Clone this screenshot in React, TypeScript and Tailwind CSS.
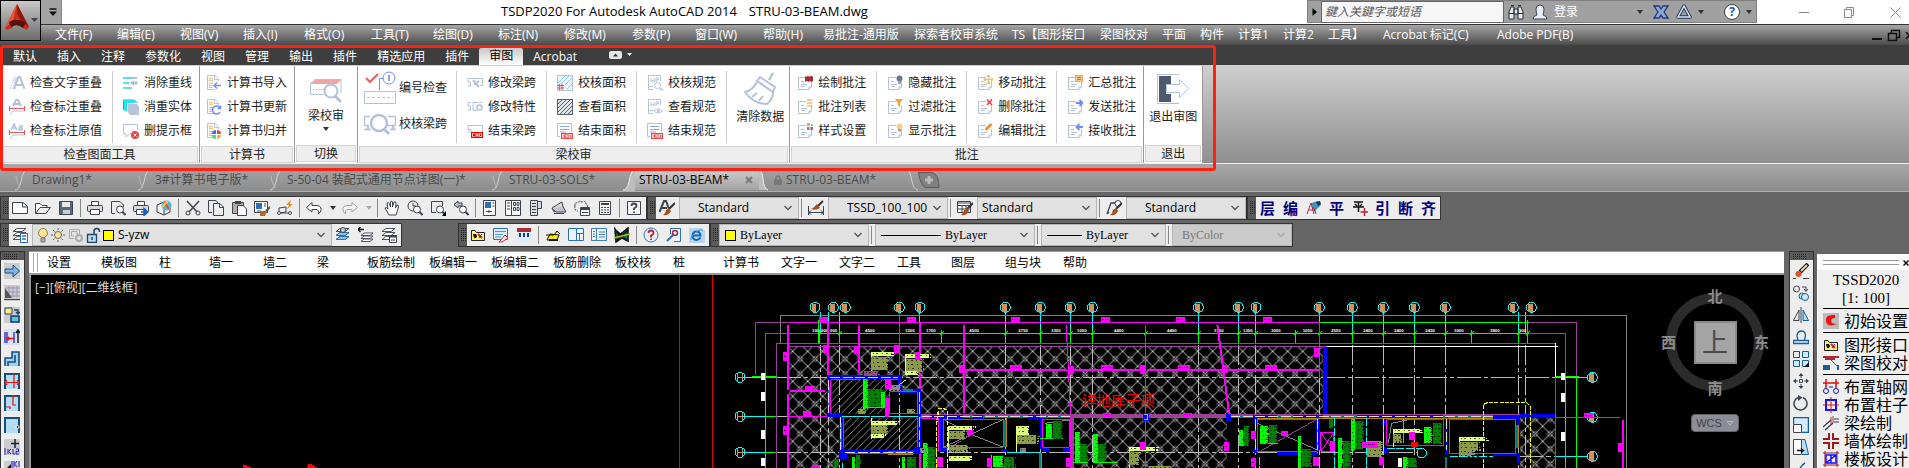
import React from 'react';

type Kids = { children?: React.ReactNode };

/* ---------- shared pieces ---------- */

function Svg({ w = 16, h = 16, children }: Kids & { w?: number; h?: number }) {
  return (
    <svg width={w} height={h} viewBox={`0 0 ${w} ${h}`} fill="none" aria-hidden="true" className="shrink-0">
      {children}
    </svg>
  );
}

function Chevron({ color = '#555' }: { color?: string }) {
  return (
    <Svg w={8} h={6}>
      <path d="M0.5 1L4 4.5L7.5 1" stroke={color} strokeWidth="1.3" />
    </Svg>
  );
}

function Down({ color = '#333' }: { color?: string }) {
  return (
    <Svg w={6} h={4}>
      <path d="M0 0H6L3 4Z" fill={color} />
    </Svg>
  );
}

const L = '#b4c1da';
const K = '#3c4450';
const B = '#2f6fb5';

/* ---------- ribbon icons ---------- */

const note = (
  <>
    <path d="M9 2.500H1.500V14.500H12L14.500 12V6" stroke={L} />
    <path d="M12 14.500V12H14.500" stroke={L} />
    <path d="M4 6.500H7M4 9.500H10M4 11.500H8" stroke={L} />
  </>
);
const sheet = (
  <>
    <path d="M9 14.500H1.500V0.500H9L12.500 4V6M8.500 0.500V4.500H12" stroke={L} />
    <path d="M3 3.500H7M3 5.500H7" stroke="#f3c98a" strokeWidth="1.500" />
    <path d="M3 8.500H7M3 10.500H6M3 12.500H6" stroke={L} />
  </>
);
const book = (
  <>
    <path d="M6 14.500H1.500V0.500H13.500V6" stroke={L} />
    <path d="M4 3V7L5.500 5L7 7V3M9 7V3H11.500V5H9M1.500 11.500H6" stroke={L} />
  </>
);
const endTag = (
  <>
    <rect x="4" y="10" width="12" height="6" fill="#f04545" />
    <path d="M7.500 11.500H5.500V14.500H7.500M5.500 13H7M9 15V11.500L11 14.500V11M12.500 11.500V14.500H14.500V11.500H12.500" stroke="#fff" strokeWidth="0.8" />
  </>
);

const ribbonIcons: Record<string, React.ReactNode> = {
  textOverlap: (
    <>
      <path d="M1 14L6 2V14M4 14L8 2" stroke={L} strokeDasharray="2 1" />
      <path d="M5 14L9.500 2H11L15.500 14M7.500 10H13" stroke={L} strokeWidth="2" />
    </>
  ),
  dimOverlap: (
    <>
      <path d="M4 7L7 1H9L12 7M6 5H11" stroke={L} strokeWidth="2" />
      <path d="M0 9.500H16M0.500 7V12M15.500 7V12" stroke="#ee5757" />
      <path d="M1 16L4 12H15" stroke={L} />
    </>
  ),
  dimValue: (
    <>
      <path d="M2 7L5 1L8 7M3.500 5H7M10 3H13V7H10V5H13" stroke={L} strokeWidth="1.500" />
      <path d="M0 9.500H16M0.500 7V12M15.500 7V12" stroke="#ee5757" />
      <path d="M1 16L4 12H15" stroke={L} />
    </>
  ),
  dedupLine: (
    <>
      <path d="M0 3H9M0 8H6M0 13H9" stroke="#27d6e0" strokeWidth="1.500" />
      <path d="M8 3H14" stroke="#a3a9b3" strokeWidth="1.500" />
      <path d="M8 8H15M10.500 6V10L8 8ZM13 6V10" stroke="#8db4c8" />
    </>
  ),
  dedupSolid: (
    <>
      <path d="M0.500 11V1H11.500L14 4" stroke="#4f9dad" />
      <path d="M1 1H11L13 4H4V13L1 11Z" fill="#20e4ee" />
      <path d="M5 5H14L16 8V16H7L5 13Z" fill="#b9c4da" />
    </>
  ),
  delBox: (
    <>
      <path d="M14.500 7V1.500H0.500V10.500H3V14L7 10.500H8" stroke={L} />
      <circle cx="12" cy="12" r="4" fill="#e5484d" />
      <path d="M10.500 10.500L13.500 13.500M13.500 10.500L10.500 13.500" stroke="#fff" />
    </>
  ),
  calcImport: (
    <>
      {sheet}
      <path d="M15 10.500H8M11 7.500L8 10.500L11 13.500" stroke="#6f8df0" strokeWidth="1.300" />
    </>
  ),
  calcUpdate: (
    <>
      {sheet}
      <path d="M14 9A4 4 0 1 0 14 13M14.500 6.500V9.500H11.500" stroke="#6f8df0" strokeWidth="1.500" />
    </>
  ),
  calcMerge: (
    <>
      {sheet}
      <path d="M10 7V11H6A4 4 0 0 1 10 7Z" fill="#4f6fd0" />
      <path d="M11 7V11H15A4 4 0 0 0 11 7Z" fill="#e5484d" />
      <path d="M10 16V12H6A4 4 0 0 0 10 16Z" fill="#5fd08a" />
      <path d="M11 16V12H15A4 4 0 0 1 11 16Z" fill="#f3b35a" />
    </>
  ),
  beamEdit: (
    <>
      <path d="M4 3.500H1V7H3.500V11H0.500M3.500 3.500H15.500V10.500H13" stroke={L} />
      <path d="M6 5L12 12M12 6L7 10" stroke={L} strokeWidth="2" />
    </>
  ),
  beamProp: (
    <>
      <path d="M4 3.500H1V7H3.500V11H0.500M11 3.500H6V11.500H10M12 3.500H15.500" stroke={L} />
      <circle cx="12.500" cy="8.500" r="2.500" stroke={L} strokeWidth="1.500" />
    </>
  ),
  beamEnd: (
    <>
      <path d="M1 2.500H15.500V9M1 2.500V6.500H4V9H0.500" stroke={L} />
      <rect x="4" y="9" width="12" height="6" fill="#e00" />
      <path d="M7.500 10.500H5.500V13.500H7.500M9 14V10.500L11 13.500V10M12.500 10.500V13.500H14.500V10.500H12.500" stroke="#fff" strokeWidth="0.8" />
    </>
  ),
  areaCheck: (
    <>
      <rect x="0.500" y="0.500" width="15" height="15" fill="#e8f5fb" stroke={L} />
      <path d="M1 8L8 1M4 9L12 1M8 10L15 3M10 14L15 9" stroke="#7cc4df" strokeWidth="0.9" />
      <path d="M2.500 9V15M5 9V15M0.500 10.500H7M0.500 13H7" stroke="#ee5757" strokeWidth="1.100" />
    </>
  ),
  areaView: (
    <>
      <rect x="0.500" y="0.500" width="15" height="15" fill="#dfe3ea" stroke="#566074" />
      <path d="M1 5L5 1M1 9L9 1M1 13L13 1M3 15L15 3M7 15L15 7M11 15L15 11" stroke="#566074" />
    </>
  ),
  areaEnd: (
    <>
      <path d="M3 13.500H0.500V0.500H14.500V9" stroke={L} />
      <path d="M3 3.500H12M3 6.500H12M3 9H9" stroke="#8fa2e6" />
      {endTag}
    </>
  ),
  codeCheck: (
    <>
      {book}
      <circle cx="10.500" cy="10.500" r="3" stroke={L} fill="#fff" />
      <path d="M13 13L15.500 15.500" stroke={L} strokeWidth="1.500" />
    </>
  ),
  codeView: (
    <>
      {book}
      <path d="M7 12Q11 7.500 15.500 12Q11 16 7 12Z" stroke={L} fill="#fff" />
      <circle cx="11.500" cy="12" r="1.500" fill={L} />
    </>
  ),
  noteDraw: (
    <>
      {note}
      <path d="M8 1L9.500 2L11 0.500L12.500 2L14 0.500L16 2V6L14.500 7L13 6L11.500 7L10 6L8 7Z" fill="#a82b36" />
    </>
  ),
  noteList: (
    <>
      {note}
      <path d="M10 1H15.500M10 4H15.500M10 7H15.500" stroke="#f3b96a" strokeWidth="1.500" />
    </>
  ),
  noteStyle: (
    <>
      {note}
      <path d="M10 0H13V3H10Z" fill="#f3a35a" />
      <path d="M14 1H16V3H14Z" fill="#6fd08a" />
      <path d="M10 4H12.500V7H10Z" fill="#5f7ff0" />
      <path d="M13.500 4H16V7H13.500Z" fill="#e5484d" />
    </>
  ),
  noteHide: (
    <>
      {note}
      <circle cx="12.500" cy="3.500" r="3" fill="#6b7688" />
      <path d="M11 6H14V9H11Z" fill="#9aa3b2" />
    </>
  ),
  noteFilter: (
    <>
      {note}
      <path d="M8 0H16L13 4V8L11 6.500V4Z" fill="#f0a236" />
    </>
  ),
  noteShow: (
    <>
      {note}
      <circle cx="12.500" cy="3.500" r="3" fill="#f7cf8c" />
      <path d="M11 6H14V8.500H11Z" fill="#9aa3b2" />
    </>
  ),
  noteMove: (
    <>
      {note}
      <path d="M11.500 0V9M7 4.500H16M10 1.500L11.500 0L13 1.500M10 7.500L11.500 9L13 7.500M8.500 3L7 4.500L8.500 6M14.500 3L16 4.500L14.500 6" stroke="#f3b96a" strokeWidth="1.200" />
    </>
  ),
  noteDelete: (
    <>
      {note}
      <path d="M10 0.500L15 6M15 0.500L10 6" stroke="#e5484d" strokeWidth="1.700" />
    </>
  ),
  noteEdit: (
    <>
      {note}
      <path d="M8.500 7L14.500 1" stroke="#e8973a" strokeWidth="3" />
    </>
  ),
  noteSum: (
    <>
      {note}
      <rect x="8.500" y="0.500" width="7" height="6" fill="#f7cf8c" stroke="#e8a850" />
      <path d="M10 2.500H14M10 4.500H14" stroke="#b27a2c" />
    </>
  ),
  noteSend: (
    <>
      {note}
      <path d="M9 4H15M12.500 1L15.500 4L12.500 7" stroke="#6f8df0" strokeWidth="2" />
    </>
  ),
  noteReceive: (
    <>
      {note}
      <path d="M16 4H10M12.500 1L9.500 4L12.500 7" stroke="#6f8df0" strokeWidth="2" />
    </>
  ),
};

/* ---------- ribbon ---------- */

function Column({ items, className = 'px-[10px]', last = false }: { items: [string, string][]; className?: string; last?: boolean }) {
  return (
    <div className={`mb-[3px] mt-[5px] flex flex-col ${className} ${last ? '' : 'border-r border-[#ccc]'}`}>
      {items.map(([icon, label]) => (
        <button key={label} type="button" className="flex h-6 items-center gap-[5px] whitespace-nowrap">
          <Svg>{ribbonIcons[icon]}</Svg>
          <span>{label}</span>
        </button>
      ))}
    </div>
  );
}

function Panel({ title, children }: Kids & { title: string }) {
  return (
    <section className="flex flex-col border-r border-[#999] bg-white">
      <div className="flex flex-1">{children}</div>
      <h2 className="mx-px mb-px flex h-[17px] items-center justify-center border border-[#d4d4d4] bg-[#eee] pt-px">{title}</h2>
    </section>
  );
}

function Ribbon() {
  return (
    <div className="flex h-[98px] bg-gradient-to-b from-[#d0d0d0] to-[#8f8f8f] pt-px text-xs text-[#222]">
      <Panel title="检查图面工具">
        <Column className="pl-[9px] pr-[10px]" items={[['textOverlap', '检查文字重叠'], ['dimOverlap', '检查标注重叠'], ['dimValue', '检查标注原值']]} />
        <Column last className="pl-[10px] pr-[7px]" items={[['dedupLine', '消除重线'], ['dedupSolid', '消重实体'], ['delBox', '删提示框']]} />
      </Panel>
      <Panel title="计算书">
        <Column last className="pl-[6px] pr-[7px]" items={[['calcImport', '计算书导入'], ['calcUpdate', '计算书更新'], ['calcMerge', '计算书归并']]} />
      </Panel>
      <Panel title="切换">
        <button type="button" className="flex flex-col items-center px-[13px] pt-[10px]">
          <Svg w={32} h={30}>
            <path d="M0.500 18V7.500L5 3.500H31V17M0.500 18.500H14M0.500 7.500H27" stroke={L} />
            <path d="M5 4H31L27 8H1Z" fill="#f0a3a3" />
            <path d="M3 13.500H14" stroke={L} strokeDasharray="2 1" />
            <circle cx="21" cy="15" r="6.500" stroke={L} strokeWidth="2" fill="#fff" />
            <path d="M25 20L31 26" stroke={L} strokeWidth="3" />
          </Svg>
          <span className="leading-5">梁校审</span>
          <span className="mt-px">
            <Down />
          </span>
        </button>
      </Panel>
      <Panel title="梁校审">
        <div className="mb-[3px] mt-[5px] flex flex-col justify-between border-r border-[#ccc] pl-[6px] pr-[9px]">
          <button type="button" className="flex h-[34px] items-center gap-[3px]">
            <Svg w={32} h={34}>
              <path d="M2 7L6 11L14 3" stroke="#e06060" strokeWidth="2" />
              <circle cx="25" cy="7" r="6" stroke="#6f8df0" />
              <path d="M25 4V10" stroke="#8fa2e6" strokeWidth="2" />
              <path d="M19 7.500H15.500V19" stroke="#6f8df0" />
              <path d="M0.500 20.500H31.500V32.500H0.500Z" stroke={L} />
              <path d="M3 26.500H29" stroke={L} strokeDasharray="3 2" />
            </Svg>
            <span>编号检查</span>
          </button>
          <button type="button" className="mb-1 flex h-[30px] items-center gap-[3px]">
            <Svg w={32} h={22}>
              <path d="M6 3.500H0.500V12.500H5M24 3.500H31.500V12.500H24M0 16.500H7M26 16.500H32M3 16L4 13L5 16M28 16L29 13L30 16" stroke={L} strokeWidth="1.300" />
              <circle cx="15" cy="10" r="8" stroke={L} strokeWidth="2.500" />
              <path d="M20 16L25 21" stroke={L} strokeWidth="3" />
            </Svg>
            <span>校核梁跨</span>
          </button>
        </div>
        <Column items={[['beamEdit', '修改梁跨'], ['beamProp', '修改特性'], ['beamEnd', '结束梁跨']]} />
        <Column items={[['areaCheck', '校核面积'], ['areaView', '查看面积'], ['areaEnd', '结束面积']]} />
        <Column items={[['codeCheck', '校核规范'], ['codeView', '查看规范'], ['areaEnd', '结束规范']]} />
        <button type="button" className="flex flex-col items-center pl-[9px] pr-[5px] pt-[6px]">
          <Svg w={32} h={34}>
            <path d="M29 1L25 8" stroke={L} strokeWidth="2.500" />
            <path d="M16 5L31 15L29 20L13 9Z" stroke={L} strokeWidth="2" />
            <path d="M13 10Q9 18 1 20Q9 32 23 32Q29 27 29 20M8 25L13 21M15 29L19 24" stroke={L} strokeWidth="2" />
          </Svg>
          <span className="mt-px leading-5">清除数据</span>
        </button>
      </Panel>
      <Panel title="批注">
        <Column className="pl-[7px] pr-[10px]" items={[['noteDraw', '绘制批注'], ['noteList', '批注列表'], ['noteStyle', '样式设置']]} />
        <Column items={[['noteHide', '隐藏批注'], ['noteFilter', '过滤批注'], ['noteShow', '显示批注']]} />
        <Column items={[['noteMove', '移动批注'], ['noteDelete', '删除批注'], ['noteEdit', '编辑批注']]} />
        <Column last className="pl-[10px] pr-[7px]" items={[['noteSum', '汇总批注'], ['noteSend', '发送批注'], ['noteReceive', '接收批注']]} />
      </Panel>
      <Panel title="退出">
        <button type="button" className="flex flex-col items-center px-[5px] pt-[6px]">
          <Svg w={32} h={34}>
            <path d="M22 2.500H0.500V31.500H22" stroke={L} />
            <path d="M2 4H14V12H9V22H14V30H2Z" fill="#4e596e" />
            <path d="M9.500 12.500H22.500V7.500L31.500 16.500L22.500 25.500V20.500H9.500Z" stroke={L} fill="#fff" />
          </Svg>
          <span className="mt-px leading-5">退出审图</span>
        </button>
      </Panel>
    </div>
  );
}

/* ---------- header ---------- */

function TitleBar() {
  return (
    <header className="relative flex h-[25px] border-b border-[#333] bg-white">
      <button type="button" aria-label="应用程序菜单" className="absolute left-0 top-0 z-10 flex h-[41px] w-[41px] items-center border border-black bg-gradient-to-b from-[#c9c9c9] to-[#6d6d6d]">
        <Svg w={39} h={39}>
          <path d="M16 3L4 27L6 29L11 27L16 18L22 27L26 29L28 26Z" fill="#c3301c" />
          <path d="M16 3L28 26L20 20L16 12Z" fill="#8c1a10" />
          <path d="M16 3L12 20L4 27Z" fill="#e4553a" />
          <path d="M8 21Q16 16 25 22L22 27Q16 22 10 26Z" fill="#5d0f0a" />
          <path d="M30 17H37L33.500 21Z" fill="#39424e" />
        </Svg>
      </button>
      <div className="flex w-[62px] justify-end border-r border-[#888] bg-[#a3a3a3] pr-1">
        <button type="button" aria-label="自定义快速访问工具栏">
          <Svg w={8} h={8}>
            <path d="M0.500 1H7.500" stroke="#111" strokeWidth="1.500" />
            <path d="M0 3.500H8L4 8Z" fill="#111" />
          </Svg>
        </button>
      </div>
      <h1 className="flex flex-1 items-center justify-center gap-3 text-[13px] text-black">
        <span>TSDP2020 For Autodesk AutoCAD 2014</span>
        <span>STRU-03-BEAM.dwg</span>
      </h1>
      <div className="flex h-[23px] items-center border border-[#808080] bg-[#a0a0a0] text-xs text-white">
        <button type="button" aria-label="展开搜索" className="flex w-[13px] justify-center">
          <Svg w={5} h={8}>
            <path d="M0.500 0V8L5 4Z" fill="#000" />
          </Svg>
        </button>
        <input aria-label="搜索" placeholder="鍵入关鍵字或短语" className="mr-1 h-[22px] w-[183px] border border-[#666] bg-[#f6f6f6] px-[3px] italic placeholder:text-[#555]" />
        <button type="button" aria-label="查找" className="w-6">
          <Svg>
            <path d="M1 15V8L3 3H6V15ZM10 15V3H13L15 8V15ZM6 5H10V10H6Z" fill="#e8e8e8" stroke="#26303c" />
            <path d="M3 1.500H6M10 1.500H13M1 9.500H6M10 9.500H15" stroke="#26303c" />
          </Svg>
        </button>
        <button type="button" className="flex items-center gap-[6px]">
          <Svg>
            <path d="M1 15Q1 12 5 11Q4 8 4 5Q4 1 8 1Q12 1 12 5Q12 8 11 11Q15 12 15 15Z" fill="#e9eef5" stroke="#3a4656" />
          </Svg>
          <span>登录</span>
        </button>
        <button type="button" aria-label="登录选项" className="ml-[59px]">
          <Down />
        </button>
        <button type="button" aria-label="Exchange" className="ml-[10px]">
          <Svg>
            <path d="M1 2H6L8 5L10 2H15L11 8L15 14H10L8 11L6 14H1L5 8Z" fill="#8fa9d8" stroke="#1f3a7a" strokeWidth="1.300" />
          </Svg>
        </button>
        <button type="button" aria-label="A360" className="ml-[7px]">
          <Svg>
            <path d="M8 2L14 13H2Z" stroke="#24375f" strokeWidth="3.500" strokeLinejoin="round" />
            <path d="M8 2L14 13H2Z" stroke="#dbe4f5" strokeWidth="1.500" />
          </Svg>
        </button>
        <button type="button" aria-label="A360 选项" className="ml-[6px]">
          <Down />
        </button>
        <button type="button" aria-label="帮助" className="ml-[20px] flex size-4 items-center justify-center rounded-full border border-[#345] bg-white text-xs font-bold text-[#1f4fae]">
          ?
        </button>
        <button type="button" aria-label="帮助选项" className="ml-[6px] mr-1">
          <Down />
        </button>
      </div>
      <div className="flex w-[152px] items-center justify-end gap-[35px] pr-2">
        <button type="button" aria-label="最小化">
          <Svg w={10} h={10}>
            <path d="M0 5.500H10" stroke="#888" />
          </Svg>
        </button>
        <button type="button" aria-label="还原">
          <Svg w={11} h={11}>
            <path d="M0.500 2.500H7.500V10.500H0.500ZM2.500 2V0.500H9.500V8.500H8" stroke="#888" />
          </Svg>
        </button>
        <button type="button" aria-label="关闭">
          <Svg w={11} h={11}>
            <path d="M0.500 0.500L10.500 10.500M10.500 0.500L0.500 10.500" stroke="#888" />
          </Svg>
        </button>
      </div>
    </header>
  );
}

const menus: [string, string][] = [
  ['文件(F)', 'w-[62px]'], ['编辑(E)', 'w-[63px]'], ['视图(V)', 'w-[63px]'], ['插入(I)', 'w-[61px]'],
  ['格式(O)', 'w-[67px]'], ['工具(T)', 'w-[62px]'], ['绘图(D)', 'w-[65px]'], ['标注(N)', 'w-[66px]'],
  ['修改(M)', 'w-[68px]'], ['参数(P)', 'w-[63px]'], ['窗口(W)', 'w-[68px]'], ['帮助(H)', 'w-[60px]'],
  ['易批注-通用版', 'w-[91px]'], ['探索者校审系统', 'w-[98px]'], ['TS【图形接口', 'w-[88px]'],
  ['梁图校对', 'w-[62px]'], ['平面', 'w-[38px]'], ['构件', 'w-[38px]'], ['计算1', 'w-[45px]'],
  ['计算2', 'w-[45px]'], ['工具】', 'w-[55px]'], ['Acrobat 标记(C)', 'w-[114px]'], ['Adobe PDF(B)', 'w-[100px]'],
];

function MenuBar() {
  return (
    <nav className="flex h-5 items-center justify-between bg-gradient-to-b from-[#a6a6a6] to-[#4b4b4b] pl-[55px] text-xs text-white">
      <div className="flex">
        {menus.map(([t, w]) => (
          <button key={t} type="button" className={`text-left whitespace-nowrap ${w}`}>
            {t}
          </button>
        ))}
      </div>
      <Svg w={38} h={14}>
        <path d="M1 11H11" stroke="#111" strokeWidth="2" />
        <path d="M17.500 5.500H25.500V12.500H17.500ZM20.500 5V2.500H28.500V9.500H26M35 4L41 11M41 4L35 11" stroke="#111" strokeWidth="1.500" />
      </Svg>
    </nav>
  );
}

const ribbonTabs = ['默认', '插入', '注释', '参数化', '视图', '管理', '输出', '插件', '精选应用', '插件', '审图', 'Acrobat'];

function RibbonTabs() {
  return (
    <div className="flex h-5 bg-[#3e3e3e] pl-[3px] text-xs text-white">
      {ribbonTabs.map((t, i) => (
        <button
          key={i}
          type="button"
          className={t === '审图' ? 'mt-[3px] rounded-t-xs bg-gradient-to-b from-[#c8c8c8] to-white px-[10px] pb-px leading-4 text-black' : 'px-[10px] pt-[3px]'}
        >
          {t}
        </button>
      ))}
      <button type="button" aria-label="最小化功能区" className="ml-[22px] flex items-center gap-[5px]">
        <Svg w={13} h={8}>
          <rect width="13" height="8" rx="2" fill="#e6e6e6" />
          <path d="M4 5.500H9L6.500 2.500Z" fill="#333" />
        </Svg>
        <Svg w={6} h={4}>
          <path d="M0 0H5L2.500 3Z" fill="#fff" />
        </Svg>
      </button>
    </div>
  );
}

/* ---------- drawing tabs ---------- */

function Slope() {
  return (
    <Svg w={12} h={22}>
      <path d="M0 21Q4 21 6 13Q8 1 12 1" stroke="#d2d2d2" />
      <path d="M1 7Q2 15 5 19" stroke="#bbb" />
    </Svg>
  );
}

const fileTabs: [string, string][] = [
  ['Drawing1*', 'w-[123px]'], ['3#计算书电子版*', 'w-[132px]'], ['S-50-04 装配式通用节点详图(一)*', 'w-[222px]'], ['STRU-03-SOLS*', 'w-[131px]'],
];

function FileTabs() {
  return (
    <div className="flex h-[28px] items-center border-b border-[#b0b0b0] bg-gradient-to-b from-[#a8a8a8] to-[#8c8c8c] pl-[15px] pt-1 text-xs text-[#4a4a4a]">
      {fileTabs.map(([t, w]) => (
        <button key={t} type="button" className={`flex items-center gap-[5px] whitespace-nowrap ${w}`}>
          <Slope />
          {t}
        </button>
      ))}
      <div className="flex w-[145px] items-center text-black">
        <Svg w={12} h={22}>
          <path d="M0 21Q4 21 6 13Q8 1 12 1V22H0Z" fill="#bdbdbd" />
          <path d="M0 21Q4 21 6 13Q8 1 12 1" stroke="#eee" />
        </Svg>
        <div className="flex h-5 flex-1 items-center justify-between border-t border-[#e0e0e0] bg-gradient-to-b from-[#cacaca] to-[#a4a4a4] pl-1 pr-[6px]">
          <button type="button">STRU-03-BEAM*</button>
          <button type="button" aria-label="关闭选项卡">
            <Svg w={8} h={8}>
              <path d="M1 1L7 7M7 1L1 7" stroke="#777" strokeWidth="2" />
            </Svg>
          </button>
        </div>
        <Svg w={9} h={22}>
          <path d="M0 1Q3 1 4 10Q5 20 9 21H0Z" fill="#bdbdbd" />
          <path d="M0 1Q3 1 4 10Q5 20 9 21" stroke="#eee" />
        </Svg>
      </div>
      <button type="button" className="ml-[6px] flex w-[133px] items-center gap-1">
        <Svg w={8} h={10}>
          <path d="M2 5V3Q2 1 4 1Q6 1 6 3V5" stroke="#777" strokeWidth="1.500" />
          <rect y="4.500" width="8" height="5.500" rx="1" fill="#777" />
        </Svg>
        STRU-03-BEAM*
      </button>
      <Svg w={11} h={22}>
        <path d="M0 1Q3 1 5 12Q6 20 11 21" stroke="#d2d2d2" />
      </Svg>
      <button type="button" aria-label="新建图形">
        <Svg w={22} h={16}>
          <path d="M0.500 0.500H14Q21 2 21 15.500H7Q2 12 0.500 0.500Z" fill="#808080" stroke="#5c5c5c" />
          <path d="M11 4V12M7 8H15" stroke="#bbb" strokeWidth="3" />
        </Svg>
      </button>
    </div>
  );
}

/* ---------- toolbars ---------- */

const printer = (
  <>
    <path d="M4.500 6V1.500H11.500V6" stroke={K} fill="#fff" />
    <rect x="0.500" y="5.500" width="15" height="6" rx="1" stroke={K} fill="#d9dde2" />
    <path d="M3.500 9.500H12.500V14.500H3.500Z" stroke={K} fill="#fff" />
  </>
);
const lens = (
  <>
    <circle cx="10" cy="9.500" r="3.500" fill="#fff" stroke={K} />
    <path d="M12.500 12L15.500 15" stroke={K} strokeWidth="2" />
  </>
);
const stack = <path d="M1 12.500L5 9.500H14L10 12.500ZM1 8.500L5 5.500H14L10 8.500ZM1 4.500L5 1.500H14L10 4.500Z" stroke={K} strokeWidth="0.9" fill="#fff" />;
const brush = (
  <>
    <path d="M16 3L10 9" stroke="#333" strokeWidth="2" />
    <path d="M10 8L12 11Q10 16 4 15Q7 13 7 10Z" fill="#a4521c" />
  </>
);
const folderY = (
  <>
    <path d="M1.500 13.500V3.500H5L6.500 5.500H14.500V13.500Z" fill="#fff27a" stroke="#222" />
    <path d="M3 7H6L7 9L6 11H4Z" fill="#111" />
    <path d="M8 7L12 11" stroke="#d22" strokeWidth="2" />
    <path d="M9 11L12 7" stroke="#22c" />
  </>
);

const toolIcons: Record<string, React.ReactNode> = {
  新建: <path d="M0.500 13.500V2.500H11L15.500 6.500V13.500ZM10.500 3V7H15" stroke={K} fill="#fff" />,
  打开: (
    <>
      <path d="M0.500 13V3.500H5L7 5.500H12V8" stroke={K} fill="#fff" />
      <path d="M0.500 13.500L5 7.500H15.500L11 13.500Z" stroke={K} fill="#eee" />
    </>
  ),
  保存: (
    <>
      <path d="M1.500 1.500H14.500V14.500H1.500Z" fill="#59697c" stroke={K} />
      <path d="M4 2H12V7H4Z" fill="#e6ebf0" />
      <path d="M5 10H12V14H5Z" fill="#c5ccd4" />
    </>
  ),
  打印: printer,
  打印预览: (
    <>
      <path d="M1.500 13V1.500H10L13.500 5V7M5 13.500H1.500" stroke={K} />
      {lens}
    </>
  ),
  发布: (
    <>
      {printer}
      <path d="M8 12H13M11 8.500L15 12L11 15.500Z" stroke="#1b5fc0" fill="#1b5fc0" strokeWidth="1.500" />
    </>
  ),
  三维打印: (
    <>
      <path d="M1 5L8 2V15L1 12ZM8 15L14 12V7" stroke={K} fill="#eef2f6" />
      <circle cx="10.500" cy="5.500" r="5" fill="#58b7d8" />
      <path d="M8 2L13 9" stroke="#e24a3a" strokeWidth="2" />
      <path d="M6 7L12 1" stroke="#f1cf3c" strokeWidth="2" />
    </>
  ),
  剪切: (
    <>
      <path d="M2 1L12 12M14 1L4 12" stroke={K} strokeWidth="1.500" />
      <circle cx="3" cy="13" r="2" stroke={K} />
      <circle cx="13" cy="13" r="2" stroke={K} />
    </>
  ),
  复制: <path d="M4 12.500H0.500V0.500H8L10 3M5.500 3.500H12L15.500 7V15.500H5.500ZM11.500 4V7.500H15" stroke={K} />,
  粘贴: (
    <>
      <path d="M1.500 2.500H12.500V13.500H1.500Z" fill="#b6aaa0" stroke={K} />
      <path d="M4 1H10V4H4Z" fill={K} />
      <path d="M6.500 5.500H12L15.500 9V15.500H6.500Z" fill="#fff" stroke={K} />
    </>
  ),
  特性匹配: (
    <>
      <path d="M0.500 1.500H13.500V12.500H0.500Z" fill="#fff" stroke={K} />
      <path d="M2 3H8V9H2Z" fill={B} />
      <path d="M10 4H12M10 6H12M3 11H7" stroke={K} />
      <path d="M16 7L12 11" stroke="#555" strokeWidth="2" />
      <path d="M6 11H13L11 16H6Z" fill="#b5662a" />
    </>
  ),
  块编辑器: (
    <>
      <path d="M2 13L2 8L9 7V12ZM2 13H14" stroke={K} />
      <circle cx="2" cy="13" r="1.500" fill="#fff" stroke={K} />
      <circle cx="13" cy="13" r="1.500" fill="#fff" stroke={K} />
      <path d="M14 0L9 5H12L10 9L16 4H13Z" fill="#f08a24" />
    </>
  ),
  放弃: <path d="M6 2.500L0.500 7.500L6 12V9.500H11Q13 10 12.500 14Q16 11 15 8Q14 5.500 11 5.500H6Z" stroke={K} fill="#fff" />,
  重做: <path d="M10 2.500L15.500 7.500L10 12V9.500H5Q3 10 3.500 14Q0 11 1 8Q2 5.500 5 5.500H10Z" stroke="#a5a5a5" fill="#f5f5f5" />,
  平移: <path d="M5 15L1 8Q2 6.500 4 9L3 3Q4.500 1.500 5.500 4L6.500 7L6.500 1.500Q8 0.500 8.500 2V7L10 2Q11.500 1 12 3L11.500 8L13 5Q15 5 14.500 7L12 15Z" stroke={K} fill="#fff" />,
  实时缩放: (
    <>
      <circle cx="6" cy="6" r="5" stroke={K} />
      <path d="M6 3V6H9" stroke={K} />
      {lens}
    </>
  ),
  窗口缩放: (
    <>
      <path d="M12.500 6V1.500H1.500V12.500H6" stroke={K} />
      {lens}
      <path d="M16 11V16H12Z" fill="#000" />
    </>
  ),
  缩放上一个: (
    <>
      <path d="M5 1L1 4.500L5 8V6H9V3H5Z" stroke={K} fill="#b8c0c8" />
      {lens}
    </>
  ),
  特性: (
    <>
      <path d="M1.500 0.500H13.500V15.500H1.500Z" stroke={K} fill="#fff" />
      <path d="M3 2H9V8H3Z" fill={B} />
      <path d="M10.500 3H12.500M10.500 6H12.500M4 11.500H10M7 10V13" stroke={K} />
    </>
  ),
  设计中心: (
    <>
      <path d="M0.500 0.500H15.500V15.500H0.500ZM6.500 1V15" stroke={K} fill="#fff" />
      <path d="M2 3H5M2 6H5M2 9H5" stroke={K} />
      <path d="M8.500 2.500H10.500V5.500H8.500ZM12 2.500H14V5.500H12ZM8.500 7.500H10.500V10.500H8.500ZM12 7.500H14V10.500H12Z" stroke={K} />
    </>
  ),
  工具选项板: (
    <>
      <path d="M2.500 0.500H9.500V15.500H2.500ZM9.500 1.500H13.500V8.500H9.500" stroke={K} fill="#d9dde2" />
      <path d="M4 3.500H8M4 6.500H8M4 9.500H8M4 12.500H8" stroke={K} />
    </>
  ),
  图纸集: (
    <>
      <path d="M1 8L11 2L12 7L3 12Z" stroke={K} fill="#ddd" />
      <path d="M1 8.500L5 12H15L12 6.500M3 13.500H13" stroke={K} fill="#bfc4ca" />
    </>
  ),
  标记集: (
    <>
      <path d="M1 6Q0 2 4 3Q5 0 8 2Q12 0 12 4Q15 5 13 7M1 6Q0 11 4 11" stroke={K} strokeDasharray="2 1" />
      <path d="M6.500 7.500H15.500V15.500H6.500Z" fill="#fff" stroke={K} />
      <path d="M7 9H15" stroke={K} strokeWidth="2" />
      <path d="M8 12.500H14" stroke={K} />
    </>
  ),
  计算器: (
    <>
      <path d="M2.500 1.500H13.500V14.500H2.500Z" fill="#f4f4f4" stroke={K} />
      <path d="M4 4H12" stroke={K} strokeWidth="2" />
      <path d="M4 7.500H12M4 10H12M4 12.500H12" stroke={K} strokeDasharray="2 1" />
    </>
  ),
  帮助: (
    <>
      <path d="M1.500 1.500H14.500V14.500H1.500Z" fill="#f4f4f4" stroke={K} />
      <path d="M5.500 6Q5.500 3.500 8 3.500Q10.500 3.500 10.500 6Q10.500 7 8 8.500V10M8 11.500V13" stroke={K} strokeWidth="1.800" />
    </>
  ),
  文字样式: (
    <>
      <path d="M0.500 12L5 1H7L10 9M3 8H8" stroke={K} strokeWidth="2" />
      {brush}
    </>
  ),
  标注样式: (
    <>
      <path d="M0.500 6V15M15.500 6V15M1 12.500H15M3 10.500L1 12.500L3 14.500M13 10.500L15 12.500L13 14.500" stroke={K} />
      <path d="M15 1L10 6" stroke="#333" strokeWidth="2" />
      <path d="M9 4L12 8Q8 11 3 9Q6 8 7 6Z" fill="#a4521c" />
    </>
  ),
  表格样式: (
    <>
      <path d="M0.500 1.500H13.500V12.500H0.500ZM1 5.500H13M1 9H13M5 5V12M9 5V12" stroke={K} fill="#fff" />
      <path d="M1 3H13" stroke="#9aa3ad" strokeWidth="2" />
      {brush}
    </>
  ),
  多重引线样式: (
    <>
      <path d="M1 14L5 3H9M1 14L3 12" stroke={K} strokeWidth="1.300" />
      <circle cx="12" cy="3.500" r="3" fill="#fff" stroke={K} />
      {brush}
    </>
  ),
  图层特性: (
    <>
      {stack}
      <path d="M8.500 6.500H15.500V15.500H8.500Z" fill="#fff" stroke={B} />
      <path d="M10 9H14M10 12H14" stroke={B} strokeWidth="1.500" />
    </>
  ),
  图层置为当前: (
    <>
      {stack}
      <path d="M1 12.500L5 9.500H14L10 12.500Z" fill="#8fc4ea" stroke={B} />
      <path d="M1 8.500L5 5.500H14L10 8.500Z" fill="#8fc4ea" stroke={B} />
      <circle cx="8" cy="3" r="2.500" fill="#ccc" stroke={K} />
    </>
  ),
  上一个图层: (
    <>
      <path d="M3 14.500L6 12H15L12 14.500ZM3 11.500L6 9H15L12 11.500ZM3 8.500L6 6H15L12 8.500Z" stroke={K} strokeWidth="0.9" fill="#fff" />
      <path d="M0 2.500H6M2.500 0L0 2.500L2.500 5" stroke="#111" strokeWidth="1.300" />
    </>
  ),
  图层状态: (
    <>
      {stack}
      <path d="M8.500 8.500H15.500V15.500H8.500Z" fill="#fff" stroke={K} />
      <path d="M8 9.500H16" stroke={K} strokeWidth="2" />
      <path d="M10 13H14" stroke={K} />
    </>
  ),
  图形接口: folderY,
  表格编辑: (
    <>
      <path d="M0.500 1.500H14.500V12.500H0.500Z" fill="#d8ecfa" stroke={B} />
      <path d="M2 4.500H13M2 7.500H10M2 10H8" stroke={B} strokeWidth="0.7" />
      <path d="M6 15L12 8L15 11L9 15Z" stroke="#b13a4a" fill="#f6e6e8" />
    </>
  ),
  图层表: (
    <>
      <path d="M1 1H15V5H1Z" fill="#a82b36" />
      <path d="M1 5H15V14H1Z" fill="#d8ecfa" />
      <path d="M4 6V10M8 6V10M12 6V10" stroke="#1c3b66" strokeWidth="2" />
    </>
  ),
  打开图纸: (
    <>
      <path d="M2 13L5 7L14 8L12 13ZM1 8H9L12 4L15 7" fill="#ffee00" stroke="#111" />
      <path d="M4 13H13" stroke="#111" strokeWidth="2" />
    </>
  ),
  右侧面板: <path d="M0.500 1.500H15.500V13.500H0.500ZM8.500 2V13M8.500 6.500H15M11.500 7V13" stroke={B} fill="#e8f3fc" />,
  左侧面板: <path d="M0.500 1.500H15.500V13.500H0.500ZM5.500 2V13M2 4.500H4M2 7H4M2 9.500H4M8 5H14M8 7.500H14M8 10H14" stroke={B} strokeWidth="0.9" fill="#e8f3fc" />,
  网架: (
    <>
      <path d="M1 2L5 8L9 5L14 1V14L8 11L2 15Z" fill="#0a6f5a" stroke="#111" strokeWidth="1.500" />
      <path d="M3 4L13 14M14 3L3 13" stroke="#111" strokeWidth="1.500" />
      <path d="M0 11L16 7" stroke="#c8b800" strokeWidth="1.500" />
    </>
  ),
  在线帮助: (
    <>
      <circle cx="8" cy="8" r="7" stroke="#3a78b8" />
      <path d="M5.500 6Q5.500 3.500 8 3.500Q10.500 3.500 10.500 6Q10.500 7.500 8 8.500V10.500M8 11.500V13" stroke="#a82b46" strokeWidth="1.800" />
    </>
  ),
  报告: (
    <>
      <path d="M4.500 7V1.500H14.500V14.500H8" stroke={B} fill="#e8f3fc" />
      <path d="M1 14L8 7" stroke={B} strokeWidth="2" />
      <circle cx="9" cy="6" r="2.500" stroke="#a82b46" strokeWidth="1.500" />
    </>
  ),
  网站: (
    <>
      <path d="M0 1H13L16 4V16H0Z" fill="#b9d6ee" />
      <path d="M11.500 10.500Q10 13 7.500 13Q3.500 12.500 3.500 8.500Q4 4.500 7.500 4.500Q11 4.500 11.500 8.500H4" stroke="#1566b5" strokeWidth="2" />
      <path d="M2 13Q1 10 7 5Q13 1 13.500 4" stroke="#3f9be0" />
    </>
  ),
};

function Tool({ name }: { name: string }) {
  return (
    <button type="button" aria-label={name} className="flex h-full w-[23px] shrink-0 items-center pl-[3px]">
      <Svg>{toolIcons[name]}</Svg>
    </button>
  );
}

const Sep = () => <div className="ml-[2px] mr-[3px] h-[18px] w-px shrink-0 bg-[#888]" />;

function Grip() {
  return (
    <svg width="8" height="22" viewBox="0 0 8 22" aria-hidden="true" className="shrink-0 bg-[#5a5a5a]">
      <path d="M2.500 4V18M4.500 4V18M6.500 4V18" stroke="#222" strokeDasharray="1 1" />
    </svg>
  );
}

const Bar = ({ children, className = '' }: Kids & { className?: string }) => (
  <div className={`flex h-6 items-center border border-[#333] bg-[#ededed] ${className}`}>{children}</div>
);

function Combo({ label, value, className, children, disabled = false }: Kids & { label: string; value: string; className: string; disabled?: boolean }) {
  return (
    <div className={`relative flex h-[22px] shrink-0 items-center border border-[#b5b5b5] ${disabled ? 'bg-[#cbcbcb] text-[#777]' : 'bg-[#e1e1e1] text-black'} ${className}`}>
      {children}
      <select aria-label={label} disabled={disabled} className="h-full min-w-0 flex-1 appearance-none bg-transparent text-inherit">
        <option>{value}</option>
      </select>
      <span className="pointer-events-none absolute inset-y-0 right-[6px] flex items-center">
        <Chevron color={disabled ? '#aaa' : '#555'} />
      </span>
    </div>
  );
}

const Swatch = () => <span className="mr-1 size-[11px] shrink-0 border border-black bg-[#ffff00]" />;

function Toolbars() {
  return (
    <div className="flex flex-col gap-[3px] bg-[#666] pb-1 pt-1 text-xs">
      <div className="flex">
        <Bar>
          <Grip />
          <Tool name="新建" /><Tool name="打开" /><Tool name="保存" /><Sep />
          <Tool name="打印" /><Tool name="打印预览" /><Tool name="发布" /><Tool name="三维打印" /><Sep />
          <Tool name="剪切" /><Tool name="复制" /><Tool name="粘贴" /><Tool name="特性匹配" /><Tool name="块编辑器" /><Sep />
          <Tool name="放弃" />
          <button type="button" aria-label="放弃列表" className="flex w-[13px] justify-center"><Down /></button>
          <Tool name="重做" />
          <button type="button" aria-label="重做列表" className="flex w-[13px] justify-center"><Down color="#aaa" /></button>
          <Sep />
          <Tool name="平移" /><Tool name="实时缩放" /><Tool name="窗口缩放" /><Tool name="缩放上一个" /><Sep />
          <Tool name="特性" /><Tool name="设计中心" /><Tool name="工具选项板" /><Tool name="图纸集" /><Tool name="标记集" /><Tool name="计算器" /><Sep />
          <Tool name="帮助" />
        </Bar>
        <Bar>
          <Grip />
          <Tool name="文字样式" />
          <Combo label="文字样式" value="Standard" className="w-[120px] pl-[18px]" />
          <Sep />
          <Tool name="标注样式" />
          <Combo label="标注样式" value="TSSD_100_100" className="w-[120px] pl-[18px]" />
          <Sep />
          <Tool name="表格样式" />
          <Combo label="表格样式" value="Standard" className="w-[120px] pl-[4px]" />
          <Sep />
          <Tool name="多重引线样式" />
          <Combo label="多重引线样式" value="Standard" className="w-[120px] pl-[18px]" />
        </Bar>
        <Bar>
          <Grip />
          {['层', '编', '', '平', '¶', '引', '断', '齐'].map((t, i) =>
            t === '' || t === '¶' ? (
              <button key={i} type="button" aria-label={t === '' ? '文字查找' : '对齐移动'} className="flex w-[23px] justify-center">
                <Svg>
                  {t === '' ? (
                    <>
                      <path d="M5 3L12 1L15 5L8 12Z" fill="#3f96b8" />
                      <path d="M10 2L14 1L15 4L12 6Z" fill="#123a5c" />
                      <path d="M1 14L5 3L8 14M3 10H7M7 7Q9 9 10 14" stroke="#b02a3a" />
                    </>
                  ) : (
                    <>
                      <path d="M2 2H11M6.500 2V12M1 7H12M3 4L5 6M10 4L8 6" stroke="#111" strokeWidth="1.500" />
                      <path d="M12.500 8V16M8.500 12H16" stroke="#b02a3a" strokeWidth="1.500" />
                    </>
                  )}
                </Svg>
              </button>
            ) : (
              <button key={i} type="button" className="w-[23px] text-center text-[15px] font-bold leading-5 text-[#00007c]">
                {t}
              </button>
            ),
          )}
        </Bar>
      </div>
      <div className="flex">
        <Bar className="mr-[56px]">
          <Grip />
          <Tool name="图层特性" />
          <Combo label="图层" value="S-yzw" className="w-[300px] pl-1">
            <Svg w={66} h={16}>
              <circle cx="6" cy="6" r="4.500" fill="#ffe69a" stroke="#8d7a3c" />
              <path d="M4 11H8V15H4Z" fill="#aaa" stroke="#777" />
              <circle cx="21" cy="8" r="3.500" fill="#ffe69a" stroke="#666" />
              <path d="M21 1V3M21 13V15M14 8H16M26 8H28M16 3L17.500 4.500M26 3L24.500 4.500M16 13L17.500 11.500M26 13L24.500 11.500" stroke="#666" />
              <path d="M32.500 2.500H42.500V7M32.500 2.500V11.500H37M34.500 4.500H40V7M34.500 4.500V9H37" stroke="#aaa" />
              <circle cx="42" cy="11" r="3" stroke="#aaa" strokeWidth="2" />
              <path d="M50.500 7.500H59.500V15.500H50.500Z" fill="#b5dcf5" stroke="#246" strokeWidth="1.300" />
              <path d="M55 10V13M57 7V4Q57 1.500 60 1.500Q62.500 1.500 62.500 5" stroke="#246" strokeWidth="1.500" />
            </Svg>
            <Swatch />
          </Combo>
          <Tool name="图层置为当前" /><Tool name="上一个图层" /><Tool name="图层状态" />
        </Bar>
        <Bar>
          <Grip />
          <Tool name="图形接口" /><Tool name="表格编辑" /><Tool name="图层表" /><Sep />
          <Tool name="打开图纸" /><Tool name="右侧面板" /><Tool name="左侧面板" /><Tool name="网架" /><Sep />
          <Tool name="在线帮助" /><Tool name="报告" /><Tool name="网站" />
        </Bar>
        <Bar className="font-['Liberation_Serif','Noto_Sans_CJK_SC',serif]">
          <Grip />
          <Combo label="颜色" value="ByLayer" className="w-[150px] pl-[5px]"><Swatch /></Combo>
          <Sep />
          <Combo label="线型" value="ByLayer" className="w-[160px] pl-[5px]"><span className="mr-1 h-px w-[60px] bg-black" /></Combo>
          <Sep />
          <Combo label="线宽" value="ByLayer" className="w-[125px] pl-[5px]"><span className="mr-1 h-px w-[35px] bg-black" /></Combo>
          <Sep />
          <Combo label="打印样式" value="ByColor" disabled className="w-[120px] pl-[9px]" />
        </Bar>
      </div>
    </div>
  );
}

/* ---------- side toolbars ---------- */

const glass = <path d="M1 16V1H15V16" stroke="#14507c" strokeWidth="2" fill="#b4dcf4" />;

const leftTools: [string, React.ReactNode][] = [
  ['下一步', <><rect width="16" height="16" fill="#ccc" /><path d="M1 6H9V2L15.500 8L9 14V10H1Z" fill="#7fb2e0" stroke="#1e4f86" /></>],
  ['网格', <><rect width="16" height="16" fill="#ccc" /><path d="M5 1V12M9 1V12M13 1V12M2 3H16M2 7H16M2 11H16" stroke="#99b" /><path d="M1 3L8 13H1Z" fill="#555" /><path d="M0 14.500H16" stroke="#444" /></>],
  ['块替换', <><rect width="16" height="16" fill="#ccc" /><path d="M1 1H8V7H1Z" fill="#ffe98a" stroke="#246" /><path d="M10 3H14V6M12 5L14 7L16 5" stroke="#246" strokeWidth="1.500" /><path d="M7 9H15V15H7Z" fill="#5fc3d8" stroke="#123a7c" strokeWidth="1.500" /></>],
  ['间距', <><rect width="16" height="16" fill="#dde" /><path d="M1 3V14M3 3V14M10 3V14" stroke="#11c" strokeWidth="1.200" /><path d="M3 9.500H10M5 8L3 9.500L5 11" stroke="#d11" strokeWidth="1.500" /><path d="M14 14V2M12 4L14 1L16 4" stroke="#123" strokeWidth="1.500" /></>],
  ['轮廓', <><path d="M1 15V7H8V1H15V15Z" fill="#9fd0ee" /><path d="M1 15V7H8V1H15V15M4 15V11H11V4" stroke="#14507c" strokeWidth="1.600" /></>],
  ['拉伸', <>{glass}<path d="M10 1V15M1 9.500H15M3 7L1 9.500L3 12M13 7L15 9.500L13 12" stroke="#d11" strokeWidth="1.200" /></>],
  ['折线', <>{glass}<path d="M1 12H6V14M9 8V1H12M9 8V10H12" stroke="#d11" strokeWidth="1.200" /></>],
  ['矩形', <>{glass}<circle cx="13.500" cy="10" r="1.500" stroke="#fff" fill="#246" /></>],
  ['梁编号', <><rect width="16" height="16" fill="#ccc" /><path d="M11 0V9M7 4.500H15" stroke="#123" strokeWidth="1.500" /><path d="M1 9V16M4 10V15M7 10L4.500 12.500L7 15M9 10V15H11M12 10H14.500V12.500H12V15H15" stroke="#22c" /></>],
  ['梁标注', <><rect width="16" height="16" fill="#ccc" /><path d="M8 0V8M10 0V6M13 0L10.500 3L13 6M15 0V6" stroke="#22c" /><path d="M2 8L7 3V10Z" fill="#111" /></>],
];

const modTools: [string, React.ReactNode][] = [
  ['删除', <><path d="M15 1L7 9" stroke="#111" strokeWidth="4" /><path d="M14 2L8 8" stroke="#f1dca0" strokeWidth="2" /><circle cx="5.500" cy="11" r="3" fill="#e0532a" /><path d="M0 15.500H3M10 15.500H16" stroke={K} /></>],
  ['复制', <><circle cx="3.500" cy="4" r="3" stroke={K} /><path d="M9 2H13V6M11 4L13 6.500L15 4" stroke={K} /><circle cx="9" cy="11" r="3" fill="#b5dcf5" stroke="#14609c" /><circle cx="12" cy="12" r="3.500" fill="#d3ebfa" stroke="#14609c" /></>],
  ['镜像', <><path d="M6 3V13.500H0.500Z" stroke={K} /><path d="M8 0V16" stroke={K} /><path d="M10 3V13.500H15.500Z" stroke="#14609c" fill="#b5dcf5" /></>],
  ['偏移', <path key="a" d="M0.500 14.500V11.500H5Q4 8 4 6Q5 2 8.500 2Q12 2 12.500 6Q12 9 11.500 11.500H15.500V14.500ZM5 11.500H11.500" stroke="#14609c" strokeWidth="1.300" />],
  ['阵列', <><path d="M0.500 0.500H6.500V6.500H0.500Z" stroke={K} /><path d="M9.500 0.500H15.500V6.500H9.500ZM0.500 9.500H6.500V15.500H0.500ZM9.500 9.500H15.500V15.500H9.500Z" stroke="#14609c" fill="#d3ebfa" /><path d="M16 11V16H11Z" fill="#111" /></>],
  ['移动', <><path d="M8 1V5M8 11V15M1 8H5M11 8H15M6.500 6.500H9.500V9.500H6.500Z" stroke={K} /><path d="M8 0L10.500 3H5.500ZM8 16L10.500 13H5.500ZM0 8L3 5.500V10.500ZM16 8L13 5.500V10.500Z" fill={K} /></>],
  ['旋转', <><path d="M10 2.500A6.500 6.500 0 1 1 5 2.500" stroke={K} strokeWidth="1.500" /><path d="M5 0L9.500 2.500L5 6Z" fill={K} /></>],
  ['缩放', <><path d="M0.500 7V0.500H15.500V15.500H9" stroke="#14609c" fill="#d3ebfa" strokeWidth="1.500" /><path d="M0.500 7.500H8.500V15.500H0.500Z" stroke={K} fill="#fff" /></>],
  ['拉伸', <><path d="M8.500 0.500H0.500V15.500H8.500Z" stroke={K} fill="#fff" /><path d="M9 0.500H12L15.500 15.500H9" stroke="#14609c" fill="#b5dcf5" /><path d="M4 11.500H10M8 9.500L10.500 11.500L8 13.500" stroke="#111" strokeWidth="1.500" /></>],
  ['修剪', <path key="a" d="M12 2Q8 4 6 10" stroke="#14609c" strokeWidth="1.500" />],
];

function SideBar({ tools }: { tools: [string, React.ReactNode][] }) {
  return (
    <aside className="w-[25px] shrink-0 overflow-hidden border-x border-t border-[#333] bg-[#ededed]">
      <svg width="23" height="8" viewBox="0 0 23 8" aria-hidden="true" className="block bg-[#5a5a5a]">
        <path d="M3 2.500H17M3 4.500H17M3 6.500H17" stroke="#222" strokeDasharray="1 1" />
      </svg>
      {tools.map(([name, icon]) => (
        <button key={name} type="button" aria-label={name} className="flex h-[22px] w-full items-center justify-start pl-[3px]">
          <Svg>{icon}</Svg>
        </button>
      ))}
    </aside>
  );
}

/* ---------- structural menu ---------- */

const tssdMenus: [string, string][] = [
  ['设置', 'w-[54px]'], ['模板图', 'w-[58px]'], ['柱', 'w-[50px]'], ['墙一', 'w-[54px]'], ['墙二', 'w-[54px]'], ['梁', 'w-[50px]'],
  ['板筋绘制', 'w-[62px]'], ['板编辑一', 'w-[62px]'], ['板编辑二', 'w-[62px]'], ['板筋删除', 'w-[62px]'], ['板校核', 'w-[58px]'],
  ['桩', 'w-[50px]'], ['计算书', 'w-[58px]'], ['文字一', 'w-[58px]'], ['文字二', 'w-[58px]'], ['工具', 'w-[54px]'],
  ['图层', 'w-[54px]'], ['组与块', 'w-[58px]'], ['帮助', 'w-[40px]'],
];

function StructMenu() {
  return (
    <nav className="flex h-[22px] items-center border-t border-[#999] bg-white text-xs text-black">
      <span className="ml-1 mr-[9px] h-[19px] w-[5px] border-x border-[#aaa]" />
      {tssdMenus.map(([t, w]) => (
        <button key={t} type="button" className={`text-left whitespace-nowrap ${w}`}>
          {t}
        </button>
      ))}
    </nav>
  );
}

/* ---------- model space ---------- */

const M = '#ff00ff';
const P = '#9c4098';

/* Axis positions; drawing units are one third of a pixel. */
const axes = [271, 295, 328, 508, 568, 826, 931, 1021, 1087, 1405, 1525, 1576, 1768, 1867, 1960, 2053, 2146, 2365, 2386];
const bubbles = [255, 310, 346, 508, 570, 826, 931, 1021, 1087, 1405, 1525, 1578, 1768, 1867, 1960, 2053, 2146, 2350, 2404];
const ticks = [268, 328, 634, 826, 931, 1021, 1087, 1247, 1405, 1525, 1576, 1696, 1768, 1867, 1960, 2053, 2146, 2224, 2365, 2392];
const dims: [number, string][] = [
  [246, '100'], [273, '900'], [300, '900'], [405, '4500'], [525, '1500'], [588, '1700'], [718, '4500'], [865, '2750'], [963, '3300'], [1041, '1050'],
  [1152, '4400'], [1311, '4400'], [1452, '3700'], [1539, '1350'], [1623, '3050'], [1718, '1050'], [1803, '2550'], [1899, '2400'], [1992, '2400'],
  [2086, '2450'], [2172, '3000'], [2280, '3800'], [2367, '900'],
];
const tags: [number, number, number, number][] = [
  [268, 82, 26, 16], [530, 82, 28, 16], [843, 82, 28, 16], [1113, 82, 28, 16], [1338, 82, 28, 16], [1599, 82, 26, 14],
  [159, 185, 16, 28], [280, 165, 14, 24], [372, 168, 14, 24], [493, 165, 16, 24], [555, 185, 16, 24], [688, 225, 16, 24],
  [226, 288, 24, 14], [220, 363, 24, 16], [159, 408, 16, 26], [246, 526, 24, 12], [840, 226, 36, 12], [1113, 226, 36, 12], [1344, 226, 36, 12],
  [1604, 226, 36, 12], [1015, 228, 16, 24], [1230, 225, 18, 26], [1475, 225, 18, 24], [1752, 175, 16, 26], [1120, 368, 24, 14], [1360, 368, 26, 14],
  [1230, 456, 18, 24], [465, 268, 18, 30], [465, 325, 12, 55], [712, 420, 18, 14], [622, 500, 18, 30], [772, 505, 14, 26], [1008, 505, 14, 26],
  [1482, 456, 16, 26], [1563, 424, 14, 24], [1563, 504, 14, 26], [1653, 424, 22, 14], [1800, 454, 16, 28], [1750, 502, 16, 26], [1895, 456, 50, 18],
  [2038, 426, 18, 24], [1948, 502, 14, 24], [2562, 370, 26, 14], [2664, 460, 14, 26],
];
const notes: [number, number, number, number, string][] = [
  [424, 186, 70, 12, '#dfff80'], [424, 200, 54, 40, '#8b9a48'], [527, 192, 84, 12, '#dfff80'], [527, 206, 56, 36, '#8b9a48'], [527, 244, 40, 12, '#dfff80'],
  [403, 244, 46, 14, '#8b5070'], [478, 284, 36, 16, '#888'], [400, 268, 14, 85, '#00ff00'], [415, 298, 50, 52, '#008000'], [452, 305, 14, 48, '#00ff00'],
  [384, 358, 26, 14, '#8b9a48'], [530, 358, 26, 12, '#8b9a48'], [424, 392, 82, 12, '#dfff80'], [424, 406, 54, 24, '#8b9a48'], [424, 432, 46, 12, '#dfff80'],
  [656, 408, 84, 12, '#dfff80'], [656, 422, 54, 26, '#8b9a48'], [656, 466, 64, 16, '#8b9a48'], [656, 498, 76, 14, '#dfff80'],
  [860, 408, 40, 26, '#dfff80'], [860, 436, 70, 26, '#8b9a48'], [948, 402, 22, 42, '#00ff00'], [970, 392, 28, 52, '#008000'],
  [580, 460, 14, 72, '#00ff00'], [594, 472, 24, 58, '#008000'], [366, 500, 12, 32, '#00ff00'], [378, 495, 14, 38, '#008000'],
  [516, 502, 12, 32, '#00ff00'], [530, 500, 30, 30, '#008000'], [312, 508, 14, 24, '#008000'], [790, 498, 32, 34, '#00ff00'], [822, 500, 36, 30, '#008000'],
  [1036, 426, 14, 90, '#00ff00'], [1050, 462, 24, 54, '#008000'], [1090, 432, 14, 84, '#00ff00'], [1104, 462, 26, 54, '#008000'],
  [1198, 470, 90, 14, '#dfff80'], [1198, 486, 32, 36, '#8b9a48'], [1258, 528, 70, 8, '#8b9a48'], [560, 474, 32, 12, '#888'], [870, 474, 22, 12, '#888'],
  [1527, 420, 14, 48, '#00ff00'], [1541, 408, 16, 60, '#008000'], [1590, 408, 26, 52, '#00ff00'], [1616, 405, 26, 55, '#008000'],
  [1704, 438, 12, 92, '#00ff00'], [1716, 476, 30, 54, '#008000'], [1862, 388, 14, 92, '#00ff00'], [1876, 394, 26, 84, '#008000'],
  [1824, 444, 14, 88, '#00ff00'], [1838, 454, 26, 78, '#008000'], [1796, 388, 14, 24, '#008000'], [1912, 454, 48, 48, '#8b9a48'],
  [1990, 418, 94, 12, '#dfff80'], [1990, 432, 26, 22, '#8b9a48'], [2082, 412, 26, 44, '#00ff00'], [2108, 400, 28, 58, '#008000'],
  [2188, 442, 90, 12, '#dfff80'], [2188, 456, 66, 24, '#8b9a48'], [2188, 480, 40, 18, '#8b9a48'], [2020, 502, 14, 30, '#00ff00'], [2034, 504, 28, 28, '#008000'],
  [2210, 482, 26, 14, '#888'],
];
const plans: [string, string, number][] = [
  [P, 'M570 377H2475M1028 377V534', 8],
  ['#0000ff', 'M292 262H512M297 258V378M292 375H337M332 375V508M510 262V302H568V488M330 487H560', 12],
  ['#008080', 'M297 290V350M333 400V478M520 301H550M475 487H548M570 381H1020M824 390V470M932 490V534', 8],
  ['#0000ff', 'M600 381H700M730 381H760M895 381H930M634 380V484M640 478H660M812 481H830M934 385V478M938 480H958M1000 480H1020', 10],
  ['#0000ff', 'M1784 170V372', 12],
  ['#008080', 'M1500 381H2300M2362 405V475M2148 500V534', 8],
  ['#0000ff', 'M1570 381H1640M1690 381H1780M1880 381H2140M2290 381H2365V404M1578 385V400M1578 474V488M1764 385V480M1960 385V404M1966 472V488M2150 380V494M2288 494H2365V520M1640 490H1760M2370 376H2476', 10],
  [M, 'M302 270H390M462 270H505M302 270V370M480 305H562V372H480ZM340 384V470M562 384V480M640 388H820V472H640ZM938 388H1018V472H938ZM574 386H626V482H574M350 492H556M1582 388H1762V484H1582ZM1772 427H1812V484H1772ZM1772 427L1812 484M1812 427L1772 484M1970 388H2142V466H1970ZM2158 388H2358V492H2158Z', 3],
  ['#c08000', 'M829 384V470M936 490V534M475 493H550M1582 385H2290M2367 405V470', 3],
];

function Drawing() {
  return (
    <svg width="1753" height="193" viewBox="31 275 1753 193" fill="none" shapeRendering="crispEdges" role="img" aria-label="结构平面图" className="block">
      <defs>
        <pattern id="lattice" width="45" height="45" patternUnits="userSpaceOnUse" patternTransform="translate(8 4)">
          <path d="M-2 -2L47 47M47 -2L-2 47" stroke="#d4d4d4" strokeWidth="2.700" shapeRendering="auto" />
          <path d="M22 14L31 23L22 32L13 23Z" stroke="#c4c4c4" strokeWidth="2" shapeRendering="auto" />
        </pattern>
        <pattern id="diagonal" width="22" height="22" patternUnits="userSpaceOnUse">
          <path d="M-2 24L24 -2" stroke="#aaa" strokeWidth="2.400" shapeRendering="auto" />
        </pattern>
      </defs>
      <path d="M679.500 275V468M712.500 275V468" stroke="#e00000" />
      <path d="M243 468V465L246 465L252 468ZM307 468L308 464H311L318 468Z" fill="#f00" />
      <g transform="translate(730 290) scale(0.333333)">
        <path d="M178 170H1778V374H178ZM178 374H328V534H178ZM1030 374H1492V534H1030ZM2370 384H2477V534H2370Z" fill="url(#lattice)" />
        <path d="M292 260H515V300H572V534H330V378H292Z" fill="#000" />
        <path d="M300 268H480V372H300ZM338 384H562V484H338Z" fill="url(#diagonal)" />
        {axes.map((x) => (
          <g key={x}>
            <path d={`M${x} 66V130`} stroke="#0ff" strokeWidth="3" />
            <path d={`M${x} 165V534`} stroke="#bbb" strokeWidth="3" strokeDasharray="60 9 12 9" />
          </g>
        ))}
        <path d="M40 262H2477M40 379H570M40 487H2060M2370 499H2477" stroke="#bbb" strokeWidth="3" strokeDasharray="70 9 14 9" />
        {[262, 379, 487].map((y) => (
          <g key={y}>
            <path d={`M45 ${y}H106`} stroke="#0ff" strokeWidth="3" />
            <path d={`M106 ${y}H140`} stroke="#0f0" strokeWidth="3" />
            <circle cx="30" cy={y} r="15" stroke="#0ff" strokeWidth="3" />
            <path d={`M23 ${y - 10}V${y + 10}M37 ${y - 10}V${y + 10}M23 ${y}H37`} stroke="#d09060" strokeWidth="4" />
          </g>
        ))}
        {[262, 382, 499].map((y) => (
          <g key={y}>
            <path d={`M2477 ${y}H2572`} stroke="#0ff" strokeWidth="3" />
            <circle cx="2587" cy={y} r="15" stroke="#0ff" strokeWidth="3" />
            <rect x="2577" y={y - 13} width="14" height="26" fill="#d09060" />
          </g>
        ))}
        <path d="M151 160V76H2690V534" stroke="#808080" strokeWidth="3" />
        <path d="M76 255V97H300M2390 97H2540V262M106 255V130H270M2400 130H2507V262M139 534V160H2477M178 169H1790M2477 260V534" stroke={P} strokeWidth="3" />
        <path d="M180 97H1768" stroke={M} strokeWidth="3" />
        <path d="M1768 97H2396M265 130H2396M106 250V534M2507 260V534M2540 260V534M65 260H140M2477 260H2547M2392 90V160M265 90V160" stroke="#0f0" strokeWidth="3" />
        <path d="M1790 169H2484M2477 160V262" stroke="#fff" strokeWidth="3" />
        {ticks.map((x) => (
          <path key={x} d={`M${x} 120V160M${x - 6} 136L${x + 6} 124`} stroke="#0f0" strokeWidth="3" />
        ))}
        {bubbles.map((x) => (
          <g key={x}>
            <circle cx={x} cy="52" r="15" stroke="#0ff" strokeWidth="3" />
            <rect x={x - 10} y="41" width="14" height="25" fill="#d09060" />
          </g>
        ))}
        <path d="M93 250H105V270H93ZM93 306H105V333H93ZM93 420H105V446H93ZM93 504H105V528H93ZM2493 250H2505V270H2493ZM2493 310H2505V336H2493ZM2493 426H2505V454H2493ZM2004 504H2016V530H2004Z" fill="#fff" />
        <g fill="#fff" fontSize="13" fontWeight="700" fontFamily="Liberation Sans, sans-serif">
          {dims.map(([x, t]) => (
            <text key={x} x={x} y="125">{t}</text>
          ))}
        </g>
        <path d="M174 105V300M174 312V534M293 100V258M387 105V250M570 100V534M702 105V368M180 302H285M705 240H1010M1030 240H1240M1250 240H1768M1462 105L1498 374M2679 390V534" stroke={M} strokeWidth="6" />
        <path d="M508 70V260M1010 105V135L1022 374V534M1247 105V534M1768 97V265M175 379H330M1030 382H1500M2477 382H2670" stroke={M} strokeWidth="3" />
        {plans.map(([c, d, w], i) => (
          <path key={i} d={d} stroke={c} strokeWidth={w} />
        ))}
        <path d="M300 262H505M297 270V370M332 380V480M568 305V480M345 487H550M575 381H1020M1500 381H2290M1578 388V480M1764 388V480M1960 388V480M2150 388V480" stroke="#ddd" strokeWidth="3" strokeDasharray="30 8" />
        <path d="M337 381H565M830 487H930M1815 384V534M1910 384V534M1770 500V534M1588 500V534M1970 475H2070M2160 499H2290M337 520V534M785 495V534" stroke="#0ff" strokeWidth="3" strokeDasharray="24 5" />
        <path d="M640 388L730 436L820 472M640 472L730 430L820 388M1582 400L1762 480M1975 460L1985 400L2040 388M945 400L1018 390" stroke="#888" strokeWidth="3" />
        <path d="M655 475L730 430M1590 484L1760 388" stroke="#a040a0" strokeWidth="3" />
        <path d="M620 534V400L626 355H640L652 360V534M2260 534V345L2270 338H2390L2402 350V534" stroke="#ff0" strokeWidth="4" strokeDasharray="12 4" />
        <path d="M400 353H475M930 445H998M1030 517H1075M1090 517H1160M1527 468H1557M1590 461H1645M2020 384V460" stroke="#0f0" strokeWidth="3" />
        <path d="M424 186V256M527 192V256M424 384V446M656 408V480M860 408V486M1198 470V534M1990 418V470M2188 442V500M527 270L488 300" stroke="#dfff80" strokeWidth="3" />
        {notes.map(([x, y, w, h, c], i) => (
          <g key={i}>
            <rect x={x} y={y} width={w * 0.85} height={h} fill={c} />
            <path
              d={Array.from({ length: Math.ceil(h / 7) }, (_, r) => `M${x} ${y + 3 + r * 7}h${w * (1 - ((r * 5 + i * 3) % 4) * 0.03)}`).join('')}
              stroke={c}
              strokeWidth="4"
              strokeDasharray="9 3 5 3"
            />
            <path
              d={Array.from({ length: Math.floor(h / 12) + 1 }, (_, r) => `M${x + 4 + ((r * 7) % 5)} ${y + 5 + r * 12}h${w - 8}`).join('')}
              stroke="#000"
              strokeWidth="2"
              strokeDasharray="3 8 6 11"
            />
          </g>
        ))}
        {tags.map(([x, y, w, h], i) => (
          <g key={i}>
            <rect x={x} y={y} width={w} height={h} fill={M} />
            <path d={`M${x + 4} ${y + h / 2}H${x + w - 6}`} stroke="#400040" strokeWidth="3" strokeDasharray="4 3" />
          </g>
        ))}
        <path d="M1238 370H1258V393H1238ZM1488 372H1504V392H1488ZM552 470H570V492H552ZM330 488H350V508H330Z" fill="#00f" />
        <path d="M1242 374H1254V389H1242" stroke="#fff" strokeWidth="2" />
        <path d="M2044 456H2064V470H2044Z" fill="#f00" />
        <circle cx="2075" cy="489" r="14" stroke="#0ff" strokeWidth="3" />
        <text x="1055" y="348" fill="#ff0000" fontSize="44" fontFamily="Noto Sans CJK SC, sans-serif">详地库子项</text>
      </g>
    </svg>
  );
}

function ViewCube() {
  return (
    <div className="absolute right-[16px] top-[11px] flex w-[106px] flex-col items-center text-[15px] leading-5 text-[#8c8c8c]">
      <div className="flex flex-col items-center gap-3">
        <div className="relative flex h-[112px] w-[108px] flex-col items-center justify-between">
          <svg width="98" height="98" viewBox="0 0 98 98" fill="none" aria-hidden="true" className="absolute left-[5px] top-[7px]">
            <circle cx="49" cy="49" r="44" stroke="#2b2b2b" strokeWidth="10" />
          </svg>
          <span className="relative font-bold">北</span>
          <div className="relative flex w-full items-center justify-between">
            <span className="font-bold">西</span>
            <button type="button" className="size-[43px] border-2 border-[#8a8a8a] bg-[#a4a4a4] text-[26px] leading-9 text-[#4a4a4a]">上</button>
            <span className="font-bold">东</span>
          </div>
          <span className="relative font-bold">南</span>
        </div>
        <button type="button" className="mt-1 flex h-[18px] w-[48px] items-center justify-center gap-1 rounded-[4px] border border-[#666] bg-[#8d8d98] font-['Liberation_Sans',sans-serif] text-[11px] text-[#444]">
          WCS
          <Svg w={8} h={5}>
            <path d="M1 0.500H7L4 4Z" stroke="#bbb" />
          </Svg>
        </button>
      </div>
    </div>
  );
}

/* ---------- screen menu ---------- */

const screenGroups: [string, React.ReactNode][][] = [
  [['初始设置', <><rect width="16" height="16" fill="#bbb" /><path d="M12 2Q2 1 3 8Q4 15 14 11Q8 11 8 8Q8 5 12 5Z" fill="#e11" /></>]],
  [
    ['图形接口', folderY],
    ['梁图校对', <><path d="M0 2H16M2 4H12" stroke="#a82b36" strokeWidth="2" /><path d="M8 5L14 11" stroke="#a82b36" /><path d="M0 10H7V15H0ZM14 10H16V15H14Z" fill="#14609c" /></>],
  ],
  [
    ['布置轴网', <><path d="M3 0V9M13 0V9M0 4H16" stroke="#d11" strokeWidth="1.500" /><circle cx="3" cy="12" r="2.500" stroke="#11c" /><circle cx="13" cy="12" r="2.500" stroke="#11c" /><path d="M6 8H10" stroke="#11c" /></>],
    ['布置柱子', <><path d="M3 3H13V13H3Z" stroke="#11f" strokeWidth="2" /><path d="M8 0V16M0 8H16" stroke="#d11" /></>],
    ['梁绘制', <><path d="M0 12L8 5M11 4H16M2 15L10 8M11 7H16" stroke="#335" strokeWidth="1.200" /><path d="M8 2V9M10 1V8" stroke="#a33" /></>],
    ['墙体绘制', <path key="a" d="M6 0V6H0M10 0V6H16M6 16V10H0M10 16V10H16" stroke="#a01818" strokeWidth="2" />],
    ['楼板设计', <><path d="M0 2H16M0 14H16M2 0V16M14 0V16" stroke="#a01818" /><path d="M3 4H13V12H3ZM8 4V12M3 12L13 4" stroke="#11f" strokeWidth="1.500" /></>],
  ],
];

function ScreenMenu() {
  return (
    <aside className="mt-[3px] w-[92px] shrink-0 overflow-hidden border-l border-t border-white bg-[#efefef] pl-[5px] text-black">
      <div className="-ml-[5px] flex h-[15px] items-center gap-1 bg-white pl-[5px]">
        <span className="h-[5px] w-[78px] border-y border-[#999]" />
        <button type="button" aria-label="关闭面板">
          <Svg w={6} h={6}>
            <path d="M0.500 0.500L5.500 5.500M5.500 0.500L0.500 5.500" stroke="#111" strokeWidth="1.500" />
          </Svg>
        </button>
      </div>
      <div className="flex h-[38px] flex-col items-center justify-center text-center font-['Liberation_Serif',serif] text-[15px] leading-[18px]">
        <p>TSSD2020</p>
        <p>[1: 100]</p>
      </div>
      {screenGroups.map((g, i) => (
        <div key={i} className="border-t border-black pb-[2px] pt-[3px]">
          {g.map(([t, icon]) => (
            <button key={t} type="button" className="flex h-[18px] items-center gap-[5px] whitespace-nowrap text-base leading-[18px]">
              <Svg>{icon}</Svg>
              {t}
            </button>
          ))}
        </div>
      ))}
    </aside>
  );
}

export default function App() {
  return (
    <div className="flex h-screen flex-col overflow-hidden bg-[#666] font-['Open_Sans','Noto_Sans_CJK_SC',sans-serif]">
      <TitleBar />
      <MenuBar />
      <div className="relative shrink-0">
        <RibbonTabs />
        <Ribbon />
        <div className="pointer-events-none absolute -bottom-[8px] left-0 top-0 z-10 w-[1216px] rounded-[3px] border-[3px] border-[#fc2112]" />
      </div>
      <div className="h-px shrink-0 bg-[#eee]" />
      <FileTabs />
      <Toolbars />
      <div className="flex min-h-0 flex-1">
        <SideBar tools={leftTools} />
        <main className="ml-1 mr-[5px] flex min-w-0 flex-1 flex-col">
          <StructMenu />
          <div className="relative min-h-0 flex-1 overflow-hidden border-l-2 border-t-2 border-[#999] bg-black">
            <p className="absolute left-1 top-[5px] text-xs text-[#ddd]">[−][俯视][二维线框]</p>
            <Drawing />
            <ViewCube />
          </div>
        </main>
        <SideBar tools={modTools} />
        <div className="w-[3px] shrink-0" />
        <ScreenMenu />
      </div>
    </div>
  );
}
